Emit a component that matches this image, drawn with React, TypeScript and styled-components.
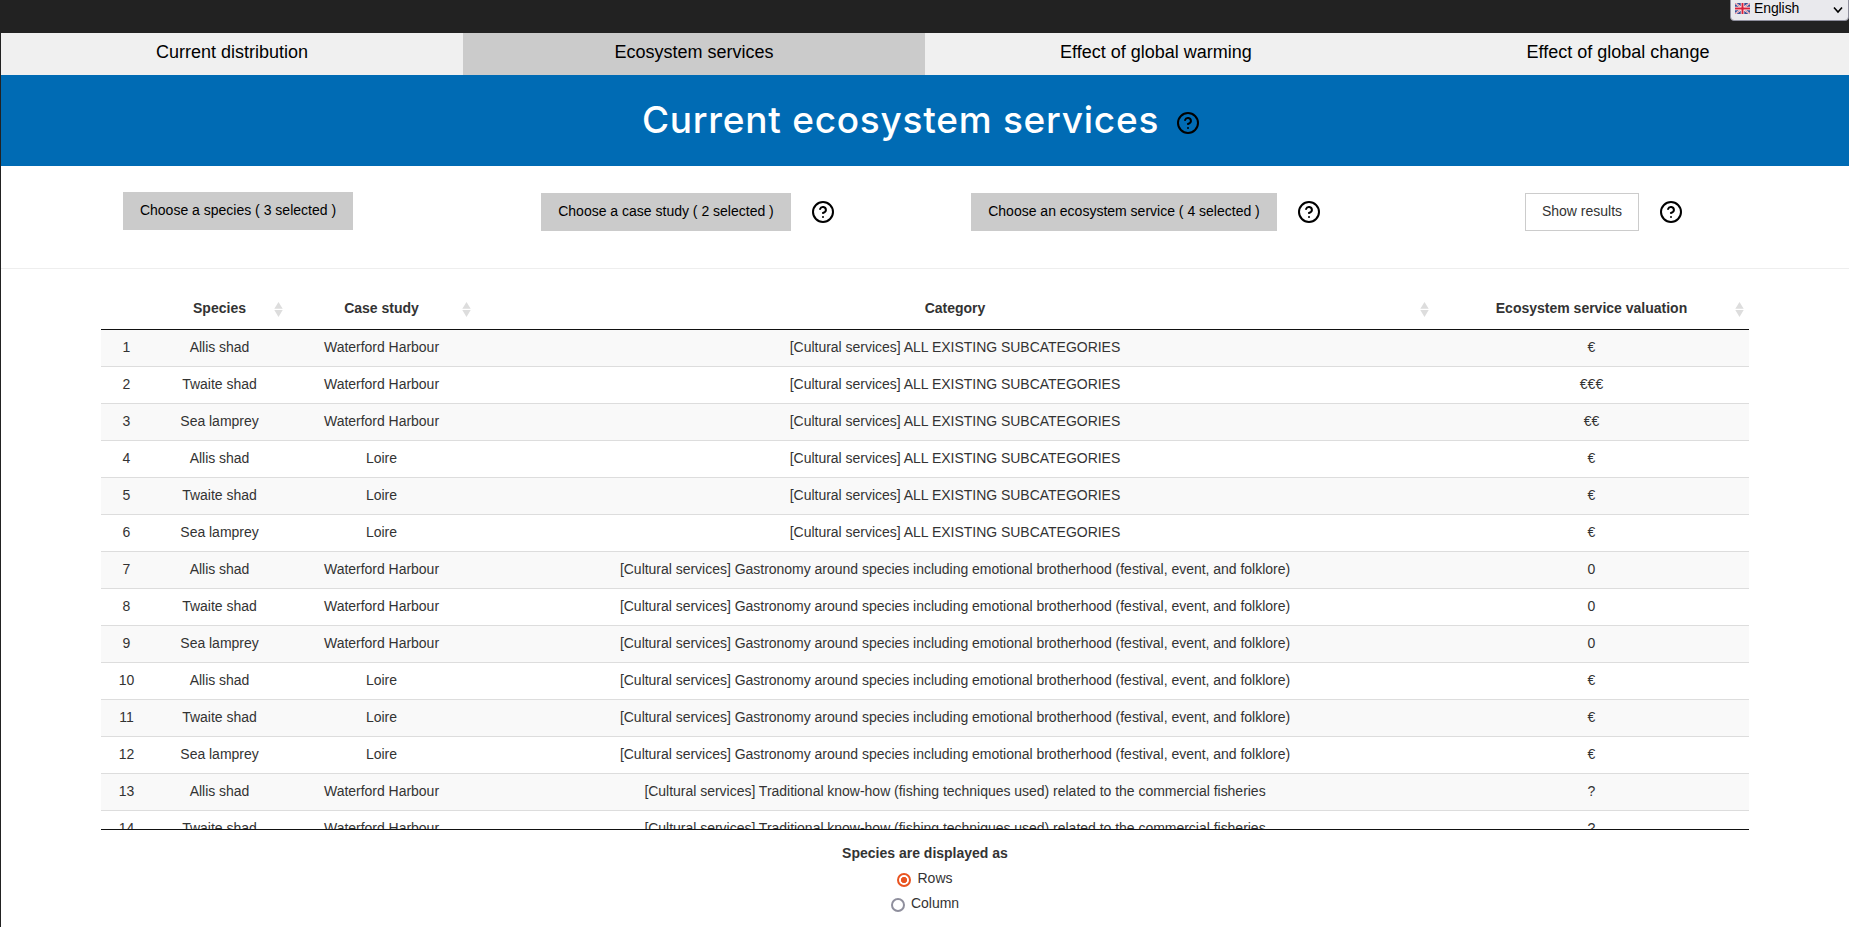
import React, { useState } from "react";
import styled, { createGlobalStyle, css } from "styled-components";

const GlobalStyle = createGlobalStyle`
  *, *::before, *::after { box-sizing: border-box; }
  html, body { margin: 0; padding: 0; }
  body {
    background: #fff;
    color: #333;
    font: 14px/20px "Liberation Sans", Arial, Helvetica, sans-serif;
    overflow: hidden;
  }
`;

const Page = styled.div`
  height: 927px;
  border-left: 1px solid #222;
  overflow: hidden;
`;

const TopBar = styled.header`
  display: flex;
  justify-content: flex-end;
  align-items: flex-start;
  height: 33px;
  background: #222;
`;

const LanguageSelect = styled.button`
  display: flex;
  align-items: center;
  width: 119px;
  height: 25px;
  margin-top: -4px;
  padding: 0 5px 1px 4px;
  border: 1px solid #8f8f9d;
  border-radius: 4px;
  background: #e9e9ed;
  color: #000;
  font: inherit;

  span {
    flex: 1;
    margin-left: 4px;
    text-align: left;
    letter-spacing: -0.1px;
  }
`;

const Chevron = styled.svg`
  margin-top: 3px;
`;

const Tabs = styled.nav`
  display: grid;
  grid-template-columns: repeat(4, 462px);
  height: 42px;
  background: #f0f0f0;
`;

const Tab = styled.a<{ $active?: boolean }>`
  padding-top: 9px;
  background: ${(p) => (p.$active ? "#cbcbcb" : "#f0f0f0")};
  color: #000;
  font-size: 18px;
  text-align: center;
  text-decoration: none;
`;

const Banner = styled.section`
  display: flex;
  justify-content: center;
  align-items: center;
  gap: 17px;
  height: 91px;
  padding: 0 8px 1px 0;
  background: #006bb4;
`;

const Title = styled.h1`
  margin: 0;
  color: #fff;
  font: 500 37px/40px Inter, sans-serif;
  letter-spacing: 0.75px;
`;

const HelpSvg = styled.svg`
  flex: none;
  fill: none;
  stroke: #000;
  stroke-width: 2;
  stroke-linecap: round;
  stroke-linejoin: round;
`;

const BannerHelp = styled.div`
  display: flex;
  margin-top: 6px;
`;

const Controls = styled.section`
  display: grid;
  grid-template-columns: repeat(4, 458px);
  height: 103px;
  padding-top: 27px;
  border-bottom: 1px solid #eee;
`;

const ControlGroup = styled.div<{ $lead?: boolean }>`
  display: flex;
  justify-content: center;
  align-items: center;
  gap: 20px;
  height: 38px;
  ${(p) =>
    p.$lead &&
    css`
      margin: -1px 0 0 16px;
    `}
`;

const Button = styled.button<{ $outline?: boolean; $width: number }>`
  width: ${(p) => p.$width}px;
  height: 38px;
  padding: 0 0 3px;
  border: 1px solid ${(p) => (p.$outline ? "#ccc" : "#cbcbcb")};
  background: ${(p) => (p.$outline ? "#fff" : "#cbcbcb")};
  color: ${(p) => (p.$outline ? "#333" : "#000")};
  font: inherit;
  white-space: nowrap;
`;

const TableArea = styled.section`
  width: 1648px;
  margin: 22px 0 0 100px;
`;

const columns = css`
  display: grid;
  grid-template-columns: 51px 135px 189px 958px 315px;
  text-align: center;
`;

const HeadRow = styled.div`
  ${columns}
  height: 39px;
  border-bottom: 1px solid #111;
  font-weight: 700;
`;

const SortIcon = styled.svg`
  position: absolute;
  right: 5px;
  top: 11px;
  fill: #ddd;
`;

const HeadCell = styled.div`
  position: relative;
  padding-top: 7px;

  &:nth-child(2) ${SortIcon} {
    right: 4px;
  }
`;

const Body = styled.div`
  height: 500px;
  overflow: hidden;
  border-bottom: 1px solid #111;
  letter-spacing: -0.02px;
`;

const Row = styled.div`
  ${columns}
  height: 37px;
  padding-top: 7px;
  border-bottom: 1px solid #ddd;
  background: #fff;

  &:nth-child(odd) {
    background: #f9f9f9;
  }
`;

const DisplayMode = styled.fieldset`
  display: flex;
  flex-direction: column;
  align-items: center;
  width: 1848px;
  margin: 0;
  padding: 13px 0 0;
  border: 0;
`;

const ModeTitle = styled.div`
  margin-bottom: 5px;
  font-weight: 700;
`;

const ModeOption = styled.label`
  display: flex;
  align-items: flex-start;
  gap: 6px;
  height: 25px;
`;

const Radio = styled.input`
  appearance: none;
  width: 14px;
  height: 14px;
  margin: 5px 0 0;
  border: 2px solid #8f8f9d;
  border-radius: 50%;
  background: #fff;

  &:checked {
    border-color: #e95420;
    background: radial-gradient(circle, #e95420 0 2.8px, #fff 3.4px);
  }
`;

function HelpIcon() {
  return (
    <HelpSvg width="24" height="24" viewBox="0 0 24 24" aria-label="Help">
      <circle cx="12" cy="12" r="10" />
      <path d="M9.09 9a3 3 0 0 1 5.83 1c0 2-3 3-3 3" />
      <path d="M12 17h.01" />
    </HelpSvg>
  );
}

function UkFlag() {
  return (
    <svg width="15" height="11" viewBox="0 0 60 44">
      <rect width="60" height="44" fill="#3b4f93" />
      <path d="M0 0L60 44M60 0L0 44" stroke="#fff" strokeWidth="7" />
      <path d="M0 0L60 44M60 0L0 44" stroke="#d8304a" strokeWidth="2.5" />
      <path d="M30 0V44M0 22H60" stroke="#fff" strokeWidth="14" />
      <path d="M30 0V44M0 22H60" stroke="#d8203a" strokeWidth="8" />
    </svg>
  );
}

function Sort() {
  return (
    <SortIcon width="9" height="15" viewBox="0 0 9 15">
      <path d="M4.5 0L8.7 6.7H.3zM4.5 15L8.7 8.1H.3z" />
    </SortIcon>
  );
}

const ALL = "[Cultural services] ALL EXISTING SUBCATEGORIES";
const FOOD =
  "[Cultural services] Gastronomy around species including emotional brotherhood (festival, event, and folklore)";
const CRAFT =
  "[Cultural services] Traditional know-how (fishing techniques used) related to the commercial fisheries";

const species = ["Allis shad", "Twaite shad", "Sea lamprey"];
const blocks: [string, string, string[]][] = [
  ["Waterford Harbour", ALL, ["€", "€€€", "€€"]],
  ["Loire", ALL, ["€", "€", "€"]],
  ["Waterford Harbour", FOOD, ["0", "0", "0"]],
  ["Loire", FOOD, ["€", "€", "€"]],
  ["Waterford Harbour", CRAFT, ["?", "?"]],
];
const rows = blocks.flatMap(([site, category, values]) =>
  values.map((value, i) => [species[i], site, category, value])
);

const tabs = [
  "Current distribution",
  "Ecosystem services",
  "Effect of global warming",
  "Effect of global change",
];

const headings = ["Species", "Case study", "Category", "Ecosystem service valuation"];

export default function App() {
  const [mode, setMode] = useState("Rows");
  return (
    <Page>
      <GlobalStyle />
      <TopBar>
        <LanguageSelect>
          <UkFlag />
          <span>English</span>
          <Chevron width="10" height="8" viewBox="0 0 10 8" fill="none" stroke="#000" strokeWidth="1.6">
            <path d="M1 1.5L5 6L9 1.5" />
          </Chevron>
        </LanguageSelect>
      </TopBar>
      <Tabs>
        {tabs.map((label, i) => (
          <Tab key={label} $active={i === 1}>
            {label}
          </Tab>
        ))}
      </Tabs>
      <Banner>
        <Title>Current ecosystem services</Title>
        <BannerHelp>
          <HelpIcon />
        </BannerHelp>
      </Banner>
      <Controls>
        <ControlGroup $lead>
          <Button $width={230}>Choose a species ( 3 selected )</Button>
        </ControlGroup>
        <ControlGroup>
          <Button $width={250}>Choose a case study ( 2 selected )</Button>
          <HelpIcon />
        </ControlGroup>
        <ControlGroup>
          <Button $width={306}>Choose an ecosystem service ( 4 selected )</Button>
          <HelpIcon />
        </ControlGroup>
        <ControlGroup>
          <Button $outline $width={114}>
            Show results
          </Button>
          <HelpIcon />
        </ControlGroup>
      </Controls>
      <TableArea>
        <HeadRow>
          <HeadCell />
          {headings.map((heading) => (
            <HeadCell key={heading}>
              {heading}
              <Sort />
            </HeadCell>
          ))}
        </HeadRow>
        <Body>
          {rows.map((cells, i) => (
            <Row key={i}>
              <div>{i + 1}</div>
              {cells.map((cell, j) => (
                <div key={j}>{cell}</div>
              ))}
            </Row>
          ))}
        </Body>
      </TableArea>
      <DisplayMode>
        <ModeTitle>Species are displayed as</ModeTitle>
        {["Rows", "Column"].map((name) => (
          <ModeOption key={name}>
            <Radio type="radio" name="mode" checked={mode === name} onChange={() => setMode(name)} />
            {name}
          </ModeOption>
        ))}
      </DisplayMode>
    </Page>
  );
}
